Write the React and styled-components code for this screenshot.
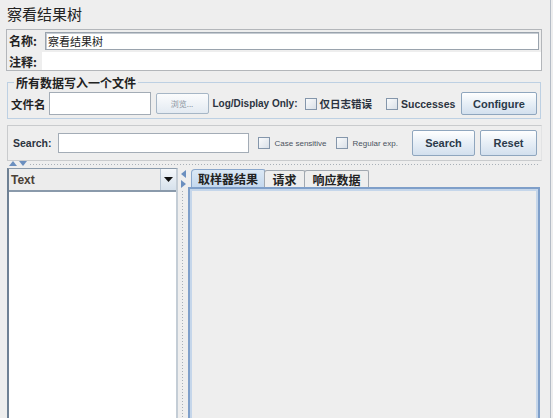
import React from "react";
import styled, { createGlobalStyle } from "styled-components";

const GlobalStyle = createGlobalStyle`
	html, body {
		margin: 0;
		padding: 0;
		background: #eeeeee;
	}
	* {
		box-sizing: border-box;
	}
`;

const CJK = `"Noto Sans CJK SC", "Liberation Sans", sans-serif`;
const LATIN = `"Liberation Sans", Arial, "Noto Sans CJK SC", sans-serif`;

function App() {
	return (
		<>
			<GlobalStyle />
			<Page>
				<Title>察看结果树</Title>

				<NamePanel>
					<NameRow>
						<FieldLabel>名称:</FieldLabel>
						<NameInput defaultValue="察看结果树" />
					</NameRow>
					<CommentRow>
						<FieldLabel>注释:</FieldLabel>
						<CommentField />
					</CommentRow>
				</NamePanel>

				<FileFieldset>
					<Legend>所有数据写入一个文件</Legend>
					<FileRow>
						<FileLabel>文件名</FileLabel>
						<FileInput />
						<BrowseButton>浏览...</BrowseButton>
						<BoldText $size={10}>Log/Display Only:</BoldText>
						<Check>
							<Box />
							<CheckText $cjk>仅日志错误</CheckText>
						</Check>
						<Check $space={14}>
							<Box />
							<CheckText>Successes</CheckText>
						</Check>
						<Button $width={76}>Configure</Button>
					</FileRow>
				</FileFieldset>

				<SearchPanel>
					<BoldText>Search:</BoldText>
					<SearchInput />
					<Check $gap={5} $space={9}>
						<Box />
						<SmallText>Case sensitive</SmallText>
					</Check>
					<Check $gap={5} $space={9}>
						<Box />
						<SmallText>Regular exp.</SmallText>
					</Check>
					<Button $width={63} $height={26}>Search</Button>
					<Button $width={57} $height={26}>Reset</Button>
				</SearchPanel>

				<HSplit>
					<SplitArrows>
						<svg width="18" height="5" viewBox="0 0 18 5">
							<path d="M0 5 L4 0 L8 5 Z" fill="#6b8fbf" />
							<path d="M10 0 L18 0 L14 5 Z" fill="#6b8fbf" />
						</svg>
					</SplitArrows>
					<Dots />
				</HSplit>

				<Main>
					<LeftPanel>
						<Combo>
							<ComboText>Text</ComboText>
							<ComboButton>
								<svg width="9" height="5" viewBox="0 0 9 5">
									<path d="M0 0 L9 0 L4.5 5 Z" fill="#111" />
								</svg>
							</ComboButton>
						</Combo>
						<ResultList />
					</LeftPanel>

					<VSplit>
						<svg width="5" height="18" viewBox="0 0 5 18">
							<path d="M5 0 L0 4 L5 8 Z" fill="#6b8fbf" />
							<path d="M0 10 L5 14 L0 18 Z" fill="#6b8fbf" />
						</svg>
						<VDots />
					</VSplit>

					<TabPane>
						<TabStrip>
							<Tab $active>取样器结果</Tab>
							<Tab>请求</Tab>
							<Tab>响应数据</Tab>
						</TabStrip>
						<TabBody />
					</TabPane>
				</Main>
			</Page>
		</>
	);
}

const Page = styled.div`
	width: 551px;
	height: 418px;
	overflow: hidden;
	display: flex;
	flex-direction: column;
	background: #eeeeee;
	border-right: 1px solid #b4bcc6;
	color: #222;
`;

const Title = styled.div`
	height: 29px;
	padding: 5px 0 0 7px;
	font-family: ${CJK};
	font-size: 15px;
	line-height: 18px;
	color: #222;
`;

const NamePanel = styled.div`
	margin-left: 6px;
	width: 536px;
	height: 42px;
	border: 1px solid #b3b6ba;
	display: flex;
	flex-direction: column;
	gap: 2px;
`;

const NameRow = styled.div`
	display: flex;
	align-items: center;
	height: 20px;
	padding: 1px 2px 0 0;
`;

const CommentRow = styled.div`
	display: flex;
	align-items: stretch;
	flex: 1;
`;

const FieldLabel = styled.span`
	width: 38px;
	padding-left: 2px;
	display: flex;
	align-items: center;
	font-family: ${CJK};
	font-weight: bold;
	font-size: 12px;
	color: #222;
	flex-shrink: 0;
	white-space: nowrap;
`;

const NameInput = styled.input`
	flex: 1;
	height: 18px;
	border: 1px solid #9aa3ad;
	box-shadow: inset 1px 1px 0 #c6ccd3;
	padding: 0 2px;
	font-family: ${CJK};
	font-size: 11px;
	outline: none;
	background: #fff;
	color: #222;
`;

const CommentField = styled.div`
	flex: 1;
	margin-left: -3px;
	background: #fff;
`;

const FileFieldset = styled.fieldset`
	margin: 5px 0 0 7px;
	width: 534px;
	padding: 2px 3px 2px 3px;
	border: 1px solid #bdd0e3;
	min-width: 0;
`;

const Legend = styled.legend`
	padding: 0 2px;
	margin-left: 3px;
	font-family: ${CJK};
	font-weight: bold;
	font-size: 12px;
	line-height: 13px;
	color: #222;
`;

const FileRow = styled.div`
	display: flex;
	align-items: center;
	height: 25px;
	white-space: nowrap;
	& > * {
		flex-shrink: 0;
	}
`;

const FileLabel = styled.span`
	font-family: ${CJK};
	font-weight: bold;
	font-size: 11.5px;
	margin-right: 3px;
	color: #222;
`;

const FileInput = styled.input`
	width: 102px;
	height: 23px;
	border: 1px solid #a3acb6;
	background: #fff;
	outline: none;
	margin-right: 5px;
`;

const Button = styled.button`
	width: ${({ $width }) => $width}px;
	height: ${({ $height }) => $height || 23}px;
	margin-left: auto;
	border: 1px solid #8fa6be;
	border-radius: 2px;
	background: linear-gradient(#ffffff, #e9f0f7 45%, #d3e0ee);
	font-family: ${LATIN};
	font-weight: bold;
	font-size: 11px;
	color: #2b3a4a;
	padding: 0;
	flex-shrink: 0;
	& + & {
		margin-left: 5px;
	}
`;

const BrowseButton = styled.button`
	width: 53px;
	height: 21px;
	border: 1px solid #a6b6c6;
	border-radius: 2px;
	background: linear-gradient(#fbfcfd, #e3eaf2);
	font-family: ${CJK};
	font-size: 8px;
	color: #8a94a0;
	padding: 0;
	margin-right: 4px;
`;

const BoldText = styled.span`
	font-family: ${LATIN};
	font-weight: bold;
	font-size: ${({ $size }) => $size || 10.5}px;
	color: #2b3340;
	white-space: nowrap;
	flex-shrink: 0;
`;

const Check = styled.span`
	display: inline-flex;
	align-items: center;
	gap: ${({ $gap }) => $gap || 3}px;
	margin-left: ${({ $space }) => $space || 7}px;
	white-space: nowrap;
	flex-shrink: 0;
`;

const Box = styled.span`
	width: 12px;
	height: 12px;
	border: 1px solid #8496ab;
	background: linear-gradient(135deg, #fafbfc, #d9e0e8);
	flex-shrink: 0;
`;

const CheckText = styled.span`
	font-family: ${({ $cjk }) => ($cjk ? CJK : LATIN)};
	font-weight: bold;
	font-size: ${({ $cjk }) => ($cjk ? 10.5 : 10.5)}px;
	color: #2b3340;
`;

const SmallText = styled.span`
	font-family: ${LATIN};
	font-size: 8px;
	color: #4a5360;
`;

const SearchPanel = styled.div`
	margin: 6px 0 0 7px;
	width: 535px;
	height: 36px;
	border: 1px solid #c9cbcd;
	border-right-color: #e2e3e4;
	display: flex;
	align-items: center;
	padding: 0 4px 0 5px;
`;

const SearchInput = styled.input`
	width: 191px;
	height: 20px;
	margin-left: 6px;
	border: 1px solid #a3acb6;
	background: #fff;
	outline: none;
	flex-shrink: 0;
`;

const HSplit = styled.div`
	height: 6px;
	margin: 1px 12px 0 9px;
	display: flex;
	align-items: flex-start;
`;

const SplitArrows = styled.div`
	display: flex;
	line-height: 0;
	margin-top: -1px;
	margin-right: 2px;
`;

const Dots = styled.div`
	flex: 1;
	height: 3px;
	margin-top: 1px;
	background-image: radial-gradient(circle, #a9b0b8 0.7px, transparent 0.8px);
	background-size: 3px 3px;
`;

const Main = styled.div`
	flex: 1;
	display: flex;
	min-height: 0;
	padding-left: 7px;
`;

const LeftPanel = styled.div`
	width: 171px;
	display: flex;
	flex-direction: column;
	border-style: solid;
	border-width: 1px 2px 0 2px;
	border-color: #8a9aab #c4cdd6 #758799 #6f8194;
`;

const Combo = styled.div`
	height: 23px;
	display: flex;
	align-items: stretch;
	border-bottom: 2px solid #8a9aab;
	background: #ececec;
`;

const ComboText = styled.span`
	flex: 1;
	display: flex;
	align-items: center;
	padding-left: 2px;
	font-family: ${LATIN};
	font-weight: bold;
	font-size: 12px;
	color: #4a4036;
`;

const ComboButton = styled.span`
	width: 16px;
	display: flex;
	align-items: center;
	justify-content: center;
	border-left: 1px solid #b7c4d2;
	background: linear-gradient(#f4f7fa, #d6e1ec);
`;

const ResultList = styled.div`
	flex: 1;
	background: #ffffff;
`;

const VSplit = styled.div`
	width: 10px;
	display: flex;
	flex-direction: column;
	align-items: center;
	padding-top: 2px;
	gap: 2px;
`;

const VDots = styled.div`
	flex: 1;
	width: 4px;
	background-image: radial-gradient(circle, #a9b0b8 0.7px, transparent 0.8px);
	background-size: 3px 3px;
`;

const TabPane = styled.div`
	width: 352px;
	display: flex;
	flex-direction: column;
`;

const TabStrip = styled.div`
	display: flex;
	align-items: flex-end;
	height: 19px;
	padding-left: 3px;
`;

const Tab = styled.div`
	height: ${({ $active }) => ($active ? 18 : 17)}px;
	padding: 0 ${({ $active }) => ($active ? 6 : 7.5)}px;
	display: flex;
	align-items: center;
	font-family: ${CJK};
	font-weight: bold;
	font-size: 12px;
	color: #222;
	border: 1px solid ${({ $active }) => ($active ? "#8aa7cc" : "#a1a8b0")};
	border-bottom: none;
	border-radius: ${({ $active }) => ($active ? "4px 2px 0 0" : "3px 2px 0 0")};
	background: ${({ $active }) =>
		$active ? "linear-gradient(#dbe8f5, #c4d8ee)" : "#eeeeee"};
	& + & {
		margin-left: -1px;
	}
`;

const TabBody = styled.div`
	flex: 1;
	border: 2px solid #7f9fc9;
	border-bottom: none;
	box-shadow: inset 2px 2px 0 #c5d6ea, inset -2px 0 0 #c5d6ea;
	background: #eeeeee;
`;

export default App;
